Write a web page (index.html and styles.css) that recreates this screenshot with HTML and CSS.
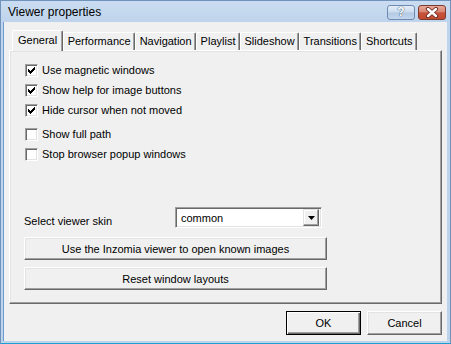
FILE: index.html
```html
<!DOCTYPE html>
<html lang="en">
<head>
    <meta charset="UTF-8">
    <title>Viewer properties</title>
    <link rel="stylesheet" href="styles.css">
</head>
<body>
    <div class="window">
        <div class="titlebar">
            <span class="title">Viewer properties</span>
            <div class="caption-buttons">
                <div class="cap help"><span>?</span></div>
                <div class="cap close">
                    <svg width="16" height="11" viewBox="0 0 16 11">
                        <path d="M4 2 L12 9 M12 2 L4 9" stroke="#6b2a1f" stroke-width="4.2" stroke-linecap="round"/>
                        <path d="M4 2 L12 9 M12 2 L4 9" stroke="#ffffff" stroke-width="2.4" stroke-linecap="round"/>
                    </svg>
                </div>
            </div>
        </div>

        <div class="client">
            <div class="tabs">
                <div class="tab active">General</div>
                <div class="tab">Performance</div>
                <div class="tab">Navigation</div>
                <div class="tab">Playlist</div>
                <div class="tab">Slideshow</div>
                <div class="tab">Transitions</div>
                <div class="tab">Shortcuts</div>
            </div>

            <div class="pane">
                <div class="checks">
                    <div class="check"><span class="box"><svg width="11" height="11" viewBox="0 0 11 11"><g fill="#000"><rect x="2" y="4" width="1" height="3"/><rect x="3" y="5" width="1" height="3"/><rect x="4" y="6" width="1" height="3"/><rect x="5" y="5" width="1" height="3"/><rect x="6" y="4" width="1" height="3"/><rect x="7" y="3" width="1" height="3"/><rect x="8" y="2" width="1" height="3"/></g></svg></span>Use magnetic windows</div>
                    <div class="check"><span class="box"><svg width="11" height="11" viewBox="0 0 11 11"><g fill="#000"><rect x="2" y="4" width="1" height="3"/><rect x="3" y="5" width="1" height="3"/><rect x="4" y="6" width="1" height="3"/><rect x="5" y="5" width="1" height="3"/><rect x="6" y="4" width="1" height="3"/><rect x="7" y="3" width="1" height="3"/><rect x="8" y="2" width="1" height="3"/></g></svg></span>Show help for image buttons</div>
                    <div class="check"><span class="box"><svg width="11" height="11" viewBox="0 0 11 11"><g fill="#000"><rect x="2" y="4" width="1" height="3"/><rect x="3" y="5" width="1" height="3"/><rect x="4" y="6" width="1" height="3"/><rect x="5" y="5" width="1" height="3"/><rect x="6" y="4" width="1" height="3"/><rect x="7" y="3" width="1" height="3"/><rect x="8" y="2" width="1" height="3"/></g></svg></span>Hide cursor when not moved</div>
                    <div class="check spaced"><span class="box"></span>Show full path</div>
                    <div class="check"><span class="box"></span>Stop browser popup windows</div>
                </div>

                <div class="skin-row">
                    <span class="skin-label">Select viewer skin</span>
                    <div class="combo">
                        <span class="combo-text">common</span>
                        <span class="drop">
                            <svg width="7" height="4" viewBox="0 0 7 4"><path d="M0 0 H7 L3.5 4 Z" fill="#000"/></svg>
                        </span>
                    </div>
                </div>

                <div class="btn wide first">Use the Inzomia viewer to open known images</div>
                <div class="btn wide">Reset window layouts</div>
            </div>

            <div class="footer">
                <div class="btn dlg default">OK</div>
                <div class="btn dlg">Cancel</div>
            </div>
        </div>
    </div>
</body>
</html>
```

FILE: styles.css
```css
body {
    margin: 0;
    font-family: 'Liberation Sans', Arial, sans-serif;
    font-size: 11px;
    color: #000;
    background: #f0f0f0;
}

.window {
    width: 451px;
    height: 344px;
    box-sizing: border-box;
    display: flex;
    flex-direction: column;
    background: linear-gradient(#cadcf1, #bed4ec 22px, #bcd3eb);
    border: 1px solid #6f93bb;
    border-bottom-color: #1a9fd0;
    padding: 0 3px 2px 2px;
}

/* title bar */

.titlebar {
    height: 21px;
    display: flex;
    align-items: center;
    padding-left: 5px;
}

.title {
    font-size: 12px;
    color: #000;
}

.caption-buttons {
    margin-left: auto;
    margin-right: 1px;
    display: flex;
    gap: 3px;
    margin-top: 2px;
}

.cap {
    width: 28px;
    height: 15px;
    box-sizing: border-box;
    border-radius: 3px;
    display: flex;
    justify-content: center;
    align-items: center;
}

.help {
    border: 1px solid #6d8bb0;
    background: linear-gradient(#e4edf7, #cbdcef 48%, #b3c9e3 52%, #c3d6ec);
}

.help span {
    font-weight: bold;
    font-size: 12px;
    color: #fff;
    text-shadow: 0 0 1px #3c5470, 0 0 1px #3c5470;
    line-height: 13px;
}

.close {
    border: 1px solid #7a3a2e;
    background: linear-gradient(#eaa797, #d88574 46%, #c6533c 52%, #c44a30);
}

/* client area */

.client {
    flex: 1;
    background: #f0f0f0;
    border-left: 1px solid #6b9bd0;
    padding: 8px 5px 0 5px;
    display: flex;
    flex-direction: column;
}

.tabs {
    height: 20px;
    display: flex;
    align-items: flex-end;
    padding-left: 3px;
}

.tab {
    height: 18px;
    line-height: 17px;
    box-sizing: border-box;
    padding: 0 3.5px;
    border-top: 1px solid #fff;
    border-left: 1px solid #fff;
    border-right: 1px solid #696969;
    border-radius: 2px 2px 0 0;
    box-shadow: inset -1px 0 #a0a0a0;
    white-space: nowrap;
}

.tab.active {
    height: 21px;
    line-height: 19px;
    margin-bottom: -1px;
    padding: 0 5px;
    background: #f0f0f0;
    position: relative;
}

.pane {
    height: 254px;
    box-sizing: border-box;
    border: 1px solid;
    border-color: #fff #696969 #696969 #fff;
    box-shadow: inset -1px -1px #a0a0a0, inset 1px 1px #e3e3e3;
    padding: 13px 0 0 14px;
}

.checks {
    display: flex;
    flex-direction: column;
    gap: 7px;
    margin-left: 1px;
}

.check {
    height: 13px;
    line-height: 13px;
    display: flex;
    align-items: center;
    gap: 4px;
}

.check.spaced {
    margin-top: 4px;
}

.box {
    width: 13px;
    height: 13px;
    box-sizing: border-box;
    border: 1px solid;
    border-color: #a0a0a0 #fff #fff #a0a0a0;
    box-shadow: inset 1px 1px #696969, inset -1px -1px #e3e3e3;
    background: #fff;
    display: flex;
}

.skin-row {
    margin-top: 46px;
    display: flex;
    align-items: center;
}

.skin-label {
    width: 151px;
    padding-top: 6px;
}

.combo {
    width: 147px;
    height: 21px;
    box-sizing: border-box;
    border: 1px solid;
    border-color: #a0a0a0 #fff #fff #a0a0a0;
    box-shadow: inset 1px 1px #696969, inset -1px -1px #e3e3e3;
    background: #fff;
    display: flex;
    align-items: center;
    padding: 2px;
}

.combo-text {
    flex: 1;
    padding-left: 3px;
}

.drop {
    width: 16px;
    height: 17px;
    box-sizing: border-box;
    background: #f0f0f0;
    border: 1px solid;
    border-color: #e3e3e3 #696969 #696969 #e3e3e3;
    box-shadow: inset -1px -1px #a0a0a0, inset 1px 1px #fff;
    display: flex;
    justify-content: center;
    align-items: center;
}

.btn {
    box-sizing: border-box;
    background: #f0f0f0;
    border: 1px solid;
    border-color: #fff #696969 #696969 #fff;
    box-shadow: inset -1px -1px #a0a0a0, inset 1px 1px #e3e3e3;
    display: flex;
    justify-content: center;
    align-items: center;
}

.btn.wide {
    width: 303px;
    height: 23px;
    margin-top: 7px;
}

.btn.wide.first {
    margin-top: 9px;
}

.footer {
    margin-top: 7px;
    display: flex;
    justify-content: flex-end;
    gap: 6px;
}

.btn.dlg {
    width: 75px;
    height: 24px;
}

.btn.default {
    border-color: #000;
    box-shadow: inset 1px 1px #fff, inset -1px -1px #696969, inset -2px -2px #a0a0a0;
}
```
